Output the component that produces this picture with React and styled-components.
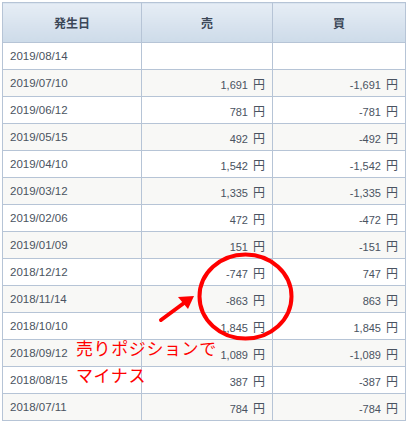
import React from "react";
import styled, { createGlobalStyle } from "styled-components";

const GlobalStyle = createGlobalStyle`
  html, body {
    margin: 0;
    padding: 0;
    background: #ffffff;
  }
  body {
    font-family: "Liberation Sans", "Noto Sans CJK JP", sans-serif;
  }
`;

const Page = styled.div`
  position: relative;
  width: 406px;
  height: 424px;
  overflow: hidden;
  padding: 2px 0 0 2px;
  box-sizing: border-box;
`;

const Table = styled.table`
  border-collapse: collapse;
  table-layout: fixed;
  width: 403px;
  border: 1px solid #b6c4d6;
`;

const Head = styled.th`
  height: 39px;
  padding: 0;
  border: 1px solid #b6c4d6;
  background: linear-gradient(#e6edf5, #cddbe9);
  color: #3c4858;
  font-family: "Noto Sans CJK JP", sans-serif;
  font-size: 12px;
  font-weight: 700;
  text-align: center;
`;

const Row = styled.tr`
  background: ${(p) => (p.$odd ? "#f8f8f6" : "#ffffff")};
`;

const Cell = styled.td`
  height: 26px;
  padding: 0 ${(p) => (p.$num ? "7px" : "0")} 0 ${(p) => (p.$num ? "0" : "7px")};
  border: 1px solid #b6c4d6;
  color: #4a5361;
  font-size: ${(p) => (p.$num ? "11px" : "11.5px")};
  text-align: ${(p) => (p.$num ? "right" : "left")};
  white-space: nowrap;
`;

const Yen = styled.span`
  margin-left: 5px;
  font-family: "Noto Sans CJK JP", sans-serif;
  font-size: 12px;
`;

const Overlay = styled.svg`
  position: absolute;
  left: 0;
  top: 0;
  pointer-events: none;
`;

const Note = styled.div`
  position: absolute;
  left: 76px;
  top: 334px;
  color: #ff0000;
  font-family: "Noto Sans CJK JP", sans-serif;
  font-size: 17px;
  letter-spacing: 0.6px;
  line-height: 27px;
`;

const rows = [
  ["2019/08/14", null, null],
  ["2019/07/10", "1,691", "-1,691"],
  ["2019/06/12", "781", "-781"],
  ["2019/05/15", "492", "-492"],
  ["2019/04/10", "1,542", "-1,542"],
  ["2019/03/12", "1,335", "-1,335"],
  ["2019/02/06", "472", "-472"],
  ["2019/01/09", "151", "-151"],
  ["2018/12/12", "-747", "747"],
  ["2018/11/14", "-863", "863"],
  ["2018/10/10", "-1,845", "1,845"],
  ["2018/09/12", "1,089", "-1,089"],
  ["2018/08/15", "387", "-387"],
  ["2018/07/11", "784", "-784"],
];

const Amount = ({ value }) =>
  value === null ? null : (
    <>
      {value}
      <Yen>円</Yen>
    </>
  );

export default function App() {
  return (
    <Page>
      <GlobalStyle />
      <Table>
        <colgroup>
          <col style={{ width: 139 }} />
          <col style={{ width: 131 }} />
          <col style={{ width: 133 }} />
        </colgroup>
        <thead>
          <tr>
            <Head>発生日</Head>
            <Head>売</Head>
            <Head>買</Head>
          </tr>
        </thead>
        <tbody>
          {rows.map(([date, sell, buy], i) => (
            <Row key={date} $odd={i % 2 === 1}>
              <Cell>{date}</Cell>
              <Cell $num>
                <Amount value={sell} />
              </Cell>
              <Cell $num>
                <Amount value={buy} />
              </Cell>
            </Row>
          ))}
        </tbody>
      </Table>

      <Overlay width="406" height="424" viewBox="0 0 406 424">
        <ellipse cx="245.5" cy="296.5" rx="46" ry="42" fill="none" stroke="#ff0000" strokeWidth="4" />
        <line x1="161" y1="320" x2="184" y2="303" stroke="#ff0000" strokeWidth="4" strokeLinecap="round" />
        <polygon points="194,296 188,309 178,297" fill="#ff0000" />
      </Overlay>
      <Note>
        売りポジションで
        <br />
        マイナス
      </Note>
    </Page>
  );
}
